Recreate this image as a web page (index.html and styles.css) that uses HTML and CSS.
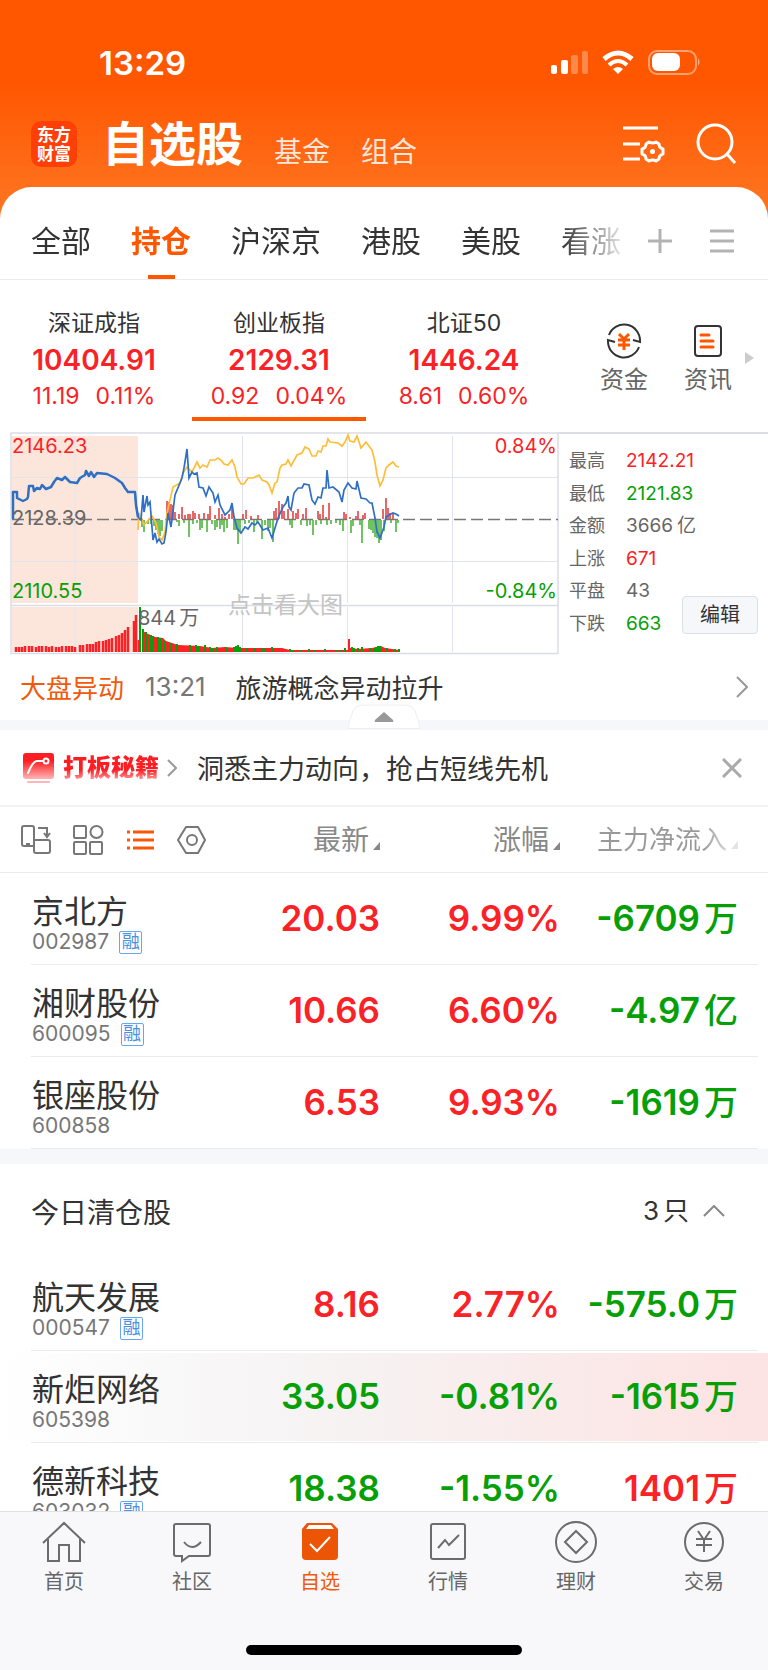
FILE: index.html
```html
<!DOCTYPE html>
<html lang="zh-CN">
<head>
<meta charset="utf-8">
<meta name="viewport" content="width=device-width, initial-scale=1">
<title>自选股</title>
<link rel="stylesheet" href="styles.css">
</head>
<body>
<header class="top">
  <div class="status">
    <span class="clock">13:29</span>
    <svg class="status-icons" viewBox="0 0 150 26" width="150" height="26" aria-hidden="true">
      <g fill="#fff">
        <rect x="0" y="15" width="6" height="9" rx="2"/>
        <rect x="10" y="10" width="7" height="14" rx="2"/>
        <rect x="20" y="5" width="7" height="19" rx="2" opacity=".3"/>
        <rect x="31" y="1" width="6" height="23" rx="2" opacity=".3"/>
        <path d="M67 24 62 19Q67 15 72 19Z"/>
        <rect x="101" y="3" width="28" height="18" rx="6"/>
        <path d="M147 8q3 4 0 8z" opacity=".5"/>
      </g>
      <g fill="none" stroke="#fff" stroke-width="5">
        <path d="M53 9Q67-3 81 9"/>
        <path d="M58 15Q67 7 76 15" stroke-width="4"/>
      </g>
      <rect x="98" y="1" width="47" height="23" rx="8" fill="none" stroke="#fff" stroke-width="2" opacity=".45"/>
    </svg>
  </div>
  <div class="bar">
    <span class="logo">东方<br>财富</span>
    <nav class="modes">
      <a class="mode-current" href="#">自选股</a>
      <a href="#">基金</a>
      <a href="#">组合</a>
    </nav>
    <button class="icon-btn" aria-label="设置">
      <svg viewBox="0 0 42 38" width="42" height="38" fill="none" stroke="#fff" stroke-width="3">
        <path d="M0 3H35M0 19H17M0 34H17"/>
        <path stroke-width="3" stroke-linejoin="round" d="M26 17q4 2 7 0l3 2q0 4 4 5v5q-4 1-4 5l-3 2q-3-2-7 0l-3-2q0-4-4-5v-5q4-1 4-5z"/>
        <circle cx="29.500" cy="26.500" r="2.500" fill="#fff" stroke="none"/>
      </svg>
    </button>
    <button class="icon-btn search" aria-label="搜索">
      <svg viewBox="0 0 42 42" width="42" height="42" fill="none" stroke="#fff" stroke-width="3">
        <circle cx="20" cy="19" r="17"/><path d="M32 31 40 40"/>
      </svg>
    </button>
  </div>
</header>

<main class="sheet">
  <div class="groups">
    <nav class="group-tabs">
      <a href="#">全部</a>
      <a class="on" href="#">持仓</a>
      <a href="#">沪深京</a>
      <a href="#">港股</a>
      <a href="#">美股</a>
      <a href="#">看涨</a>
    </nav>
    <button class="icon-btn" aria-label="添加分组">
      <svg viewBox="0 0 26 26" width="26" height="26" stroke="#b3b3b3" stroke-width="3"><path d="M13 1V25M1 13H25"/></svg>
    </button>
    <button class="icon-btn group-menu" aria-label="分组管理">
      <svg viewBox="0 0 24 26" width="24" height="26" stroke="#b3b3b3" stroke-width="3"><path d="M0 3H24M0 13H24M0 23H24"/></svg>
    </button>
  </div>

  <section class="indices">
    <a class="index" href="#"><span class="index-name">深证成指</span><b>10404.91</b><span class="index-move"><i>11.19</i><i>0.11%</i></span></a>
    <a class="index picked" href="#"><span class="index-name">创业板指</span><b>2129.31</b><span class="index-move"><i>0.92</i><i>0.04%</i></span></a>
    <a class="index" href="#"><span class="index-name">北证50</span><b>1446.24</b><span class="index-move"><i>8.61</i><i>0.60%</i></span></a>
    <a class="tool tool-first" href="#">
      <svg viewBox="0 0 36 36" width="36" height="36" fill="none" stroke="#333" stroke-width="2">
        <path d="M3 12A16 16 0 0 1 34 18V19L27 17M33 24A16 16 0 0 1 2 18V17L9 19"/>
        <path stroke="#ff5600" stroke-width="3" d="M13 11l5 5 5-5M18 16V27M12 17H24M12 22H24"/>
      </svg>
      资金
    </a>
    <a class="tool" href="#">
      <svg viewBox="0 0 36 36" width="36" height="36" fill="none" stroke="#333" stroke-width="2">
        <rect x="5" y="3" width="26" height="30" rx="3"/>
        <path stroke="#ff5600" stroke-width="3" stroke-linecap="round" d="M11 12H19M11 18H23M11 24H23"/>
      </svg>
      资讯
    </a>
    <span class="more"></span>
  </section>

  <section class="market">
    <svg class="chart" viewBox="10 432 549 223" role="img" aria-label="创业板指分时图">
      <path fill="#fce5da" d="M12 436H138V603H12zM12 607H138V652H12z"/>
      <path fill="none" stroke="#e1e4ee" stroke-width="1" d="M75 436V603M242.500 436V603M347.500 436V603M452.500 436V603M75 607V652M242.500 607V652M347.500 607V652M452.500 607V652M11 477.500H558M11 561.500H558"/>
      <path fill="none" stroke="#dadde5" stroke-width="1.500" d="M10 433H559M11 433V653.500H558V433M11 605.500H558"/>
      <path stroke="#777" stroke-width="1.500" stroke-dasharray="12 5" d="M12 519.500H558"/>
      <path fill="none" stroke="#e84c4c" stroke-width="1.700" d="M167 519V501M169 519V502M171 519V504M173 519V505M175 519V512M179 519V514M182 519V507M185 519V515M188 519V514M190 519V514M193 519V511M195 519V513M199 519V514M204 519V513M208 519V514M210 519V506M215 519V515M219 519V508M222 519V514M225 519V517M229 519V514M232 519V507M243 519V514M246 519V510M251 519V516M258 519V515M274 519V511M276 519V508M279 519V501M282 519V504M284 519V511M288 519V509M293 519V511M296 519V513M298 519V509M303 519V514M306 519V508M318 519V511M320 519V514M323 519V505M326 519V517M329 519V503M344 519V512M346 519V514M350 519V517M356 519V516M358 519V511M363 519V515M365 519V513M383 519V509M386 519V498M388 519V508M390 519V513M393 519V514"/>
      <path fill="none" stroke="#57b947" stroke-width="1.700" d="M142 520V527M144 520V532M148 520V524M151 520V524M154 520V526M156 520V530M158 520V534M160 520V536M162 520V531M177 520V522M179 520V526M184 520V523M189 520V537M193 520V524M197 520V523M200 520V530M202 520V528M207 520V532M212 520V524M215 520V530M217 520V527M220 520V529M222 520V525M224 520V532M227 520V528M234 520V530M236 520V530M238 520V544M240 520V531M245 520V524M249 520V523M254 520V532M257 520V523M262 520V539M265 520V525M268 520V531M270 520V528M273 520V542M290 520V525M292 520V528M301 520V525M307 520V526M310 520V525M313 520V535M316 520V525M321 520V524M327 520V525M331 520V524M336 520V523M340 520V525M343 520V531M351 520V533M353 520V526M360 520V525M362 520V543M369 520V529M371 520V530M373 520V533M375 520V537M377 520V538M379 520V543M381 520V540M384 520V531M391 520V523M396 520V532M398 520V523"/>
      <path fill="none" stroke="#ffbd38" stroke-width="1.700" d="M138 530 139 513 144 525 152 516 156 523 159 537 162 540 165 532 167 513 173 487 180 483 183 473 187 467 192 472 197 462 200 468 203 465 207 467 210 460 215 460 218 458 222 461 224 464 228 465 232 460 235 467 237 477 241 484 244 484 248 478 253 478 259 475 262 480 267 482 269 485 272 493 275 483 277 482 280 468 282 465 286 464 288 460 291 466 297 455 302 453 305 447 309 449 312 456 316 456 318 451 321 452 323 446 326 446 328 439 330 442 338 443 342 446 345 442 348 435 350 441 354 442 357 436 361 448 366 442 372 450 375 462 377 475 380 486 383 480 386 468 389 465 393 462 396 466 399 467"/>
      <path fill="none" stroke="#2f70c4" stroke-width="1.700" d="M135 492 136 505 138 517 141 520 143 495 144 512 147 496 148 505 150 502 153 540 155 533 157 542 159 539 162 544 164 543 166 532 168 513 171 527 175 495 182 478 184 468 187 449 189 478 192 472 194 474 197 473 199 487 203 488 206 496 209 487 213 493 215 502 218 495 220 505 225 515 230 510 232 503 234 517 237 528 241 533 245 527 248 529 252 523 255 525 258 522 263 530 268 528 272 538 278 518 283 507 286 503 288 496 289 507 291 510 294 493 298 488 302 488 304 484 309 485 312 500 315 504 318 497 321 498 323 488 326 488 327 470 329 488 333 487 339 492 342 502 344 490 348 483 352 488 356 489 357 481 361 498 366 499 370 503 372 503 375 518 377 532 380 538 384 527 386 517 389 515 393 513 396 514 399 516"/>
      <path fill="none" stroke="#2f70c4" stroke-width="2.500" stroke-linejoin="round" d="M13 519V492H17V498L19 499 23 501 27 499 28 497 29 486H33L34 491 37 488 40 489 42 485 46 489 51 487 54 482 57 478 62 480 65 477 70 482 77 483 80 478 85 475 86 471 89 476 91 472 94 477 97 473 107 474 115 478 122 483 125 488 128 492H135L136 505 138 517"/>
      <path fill="none" stroke="#fa2226" stroke-width="2.500" d="M16 652V647M19 652V647M22 652V647M25 652V646M29 652V646M32 652V646M36 652V647M39 652V646M42 652V646M46 652V646M49 652V647M52 652V646M56 652V647M59 652V647M62 652V646M66 652V646M69 652V646M72 652V646M75 652V647M80 652V645M83 652V645M87 652V644M90 652V644M93 652V644M96 652V642M99 652V641M103 652V641M106 652V640M109 652V639M112 652V638M116 652V636M119 652V635M122 652V633M125 652V630M128 652V627M134 652V621M136 652V615M139 652V640"/>
      <path fill="#fa2226" d="M142 652V630L146 633 155 637 163 638 166 641 178 645 200 646 212 648 225 647 238 648 250 648 270 648 282 648 290 650 340 650 348 650V639H350V648L358 649 372 648 381 646 385 648 399 650V652z"/>
      <path fill="none" stroke="#0a9d0a" stroke-width="2" d="M140 652V607M143 652V629M146 652V632M151 652V635M153 652V636M158 652V637M161 652V638M164 652V641M171 652V643M177 652V644M190 652V645M196 652V645M199 652V646M205 652V645M210 652V647M213 652V648M217 652V647M226 652V647M234 652V647M236 652V646M238 652V645M240 652V647M247 652V648M255 652V648M262 652V648M265 652V649M272 652V647M290 652V649M293 652V650M301 652V650M309 652V649M314 652V650M325 652V649M336 652V650M340 652V650M345 652V648M352 652V647M354 652V648M358 652V648M362 652V647M370 652V648M374 652V648M376 652V647M378 652V646M380 652V646M387 652V648M395 652V649M399 652V649"/>
      <g class="chart-text">
        <text class="up" x="12" y="453">2146.23</text>
        <text class="flat" x="12" y="525">2128.39</text>
        <text class="down" x="12" y="598">2110.55</text>
        <text class="up" x="557" y="453" text-anchor="end">0.84%</text>
        <text class="down" x="557" y="598" text-anchor="end">-0.84%</text>
        <text class="flat" x="138" y="625">844<tspan dx="3">万</tspan></text>
        <text class="hint" x="228" y="613">点击看大图</text>
      </g>
    </svg>
    <div class="stats">
      <dl>
        <div><dt>最高</dt><dd class="up">2142.21</dd></div>
        <div><dt>最低</dt><dd class="down">2121.83</dd></div>
        <div><dt>金额</dt><dd>3666<span class="unit">亿</span></dd></div>
        <div><dt>上涨</dt><dd class="up">671</dd></div>
        <div><dt>平盘</dt><dd>43</dd></div>
        <div><dt>下跌</dt><dd class="down">663</dd></div>
      </dl>
      <button class="edit">编辑</button>
    </div>
  </section>

  <a class="news" href="#">
    <span class="news-kind">大盘异动</span>
    <time>13:21</time>
    <span class="news-title">旅游概念异动拉升</span>
    <svg viewBox="0 0 12 22" width="12" height="22" fill="none" stroke="#999" stroke-width="2"><path d="M1 1 11 11 1 21"/></svg>
  </a>
  <div class="band fold">
    <button class="fold-btn" aria-label="收起">
      <svg viewBox="0 0 74 25" width="74" height="25">
        <path fill="#fff" stroke="#eceef1" stroke-width="1" d="M1 24.500Q3 14 6 7 9 1 17 1H57Q65 1 68 7 71 14 73 24.500z"/>
        <path fill="#999" d="M37 8 46 16Q47 18 45 18H29Q27 18 28 16z"/>
      </svg>
    </button>
  </div>

  <section class="promo">
    <svg viewBox="0 0 31 30" width="31" height="30">
      <defs><linearGradient id="fade" x1="0" y1="0" x2="0" y2="1"><stop offset=".3" stop-color="#fd1d22"/><stop offset="1" stop-color="#ffb5b5"/></linearGradient></defs>
      <rect width="31" height="26" rx="3" fill="url(#fade)"/>
      <path fill="none" stroke="#fff" stroke-width="2" stroke-linecap="round" d="M5 20Q10 8 14 8H20"/>
      <circle cx="23" cy="8" r="2.500" fill="none" stroke="#fff" stroke-width="2"/>
      <path stroke="#ffb5b5" stroke-width="2" stroke-linecap="round" d="M5 29H26"/>
    </svg>
    <strong>打板秘籍</strong>
    <svg class="promo-arrow" viewBox="0 0 10 18" width="10" height="18" fill="none" stroke="#999" stroke-width="2"><path d="M1 1 9 9 1 17"/></svg>
    <a href="#">洞悉主力动向，抢占短线先机</a>
    <button class="icon-btn" aria-label="关闭">
      <svg viewBox="0 0 20 20" width="20" height="20" stroke="#aaa" stroke-width="3"><path d="M1 1 19 19M19 1 1 19"/></svg>
    </button>
  </section>

  <table class="stocks">
    <colgroup><col><col class="c-price"><col class="c-rate"><col class="c-flow"></colgroup>
    <thead>
      <tr>
        <th>
          <div class="views">
            <button class="icon-btn" aria-label="横屏"><svg viewBox="0 0 31 30" width="31" height="30" fill="none" stroke="#777" stroke-width="2"><path d="M13 22H3Q1 22 1 20V4Q1 2 3 2H11Q13 2 13 4V27Q13 29 15 29H27Q29 29 29 27V18Q29 16 27 16H13M5 20H9" transform="translate(0 -1)"/><path d="M17 3H26V10M23 8 26 12 29 8"/></svg></button>
            <button class="icon-btn" aria-label="宫格"><svg viewBox="0 0 31 30" width="31" height="30" fill="none" stroke="#777" stroke-width="2"><rect x="1" y="1" width="12" height="12" rx="1"/><circle cx="23.500" cy="7" r="6"/><rect x="1" y="17" width="12" height="12" rx="1"/><rect x="17" y="17" width="12" height="12" rx="1"/></svg></button>
            <button class="icon-btn" aria-label="列表"><svg viewBox="0 0 31 30" width="31" height="30" stroke="#ff5600" stroke-width="3"><path d="M2 7H5M2 15H5M2 23H5M8 7H29M8 15H29M8 23H29"/></svg></button>
            <button class="icon-btn" aria-label="设置"><svg viewBox="0 0 31 30" width="31" height="30" fill="none" stroke="#777" stroke-width="2"><path stroke-linejoin="round" d="M9 2H21L28 15 21 28H9L1 15z"/><circle cx="15" cy="15" r="5"/></svg></button>
          </div>
        </th>
        <th><button class="sort">最新</button></th>
        <th><button class="sort">涨幅</button></th>
        <th><button class="sort last">主力净流入</button></th>
      </tr>
    </thead>
    <tbody>
      <tr><td><span class="name">京北方</span><span class="code">002987<em>融</em></span></td><td class="up">20.03</td><td class="up">9.99%</td><td class="down">-6709<span class="unit">万</span></td></tr>
      <tr><td><span class="name">湘财股份</span><span class="code">600095<em>融</em></span></td><td class="up">10.66</td><td class="up">6.60%</td><td class="down">-4.97<span class="unit">亿</span></td></tr>
      <tr><td><span class="name">银座股份</span><span class="code">600858</span></td><td class="up">6.53</td><td class="up">9.93%</td><td class="down">-1619<span class="unit">万</span></td></tr>
    </tbody>
  </table>
  <div class="band"></div>
  <button class="section-head">
    <span>今日清仓股</span>
    <span class="count">3<span class="unit">只</span></span>
    <svg viewBox="0 0 22 12" width="22" height="12" fill="none" stroke="#888" stroke-width="2"><path d="M1 11 11 1 21 11"/></svg>
  </button>
  <table class="stocks">
    <colgroup><col><col class="c-price"><col class="c-rate"><col class="c-flow"></colgroup>
    <tbody>
      <tr><td><span class="name">航天发展</span><span class="code">000547<em>融</em></span></td><td class="up">8.16</td><td class="up">2.77%</td><td class="down">-575.0<span class="unit">万</span></td></tr>
      <tr class="flash"><td><span class="name">新炬网络</span><span class="code">605398</span></td><td class="down">33.05</td><td class="down">-0.81%</td><td class="down">-1615<span class="unit">万</span></td></tr>
      <tr><td><span class="name">德新科技</span><span class="code">603032<em>融</em></span></td><td class="down">18.38</td><td class="down">-1.55%</td><td class="up">1401<span class="unit">万</span></td></tr>
    </tbody>
  </table>
</main>

<footer class="dock">
  <nav>
    <a href="#"><svg viewBox="0 0 44 44" width="44" height="44"><path d="M1 23 22 3 43 23M6 19V41H17V25H27V41H38V19"/></svg>首页</a>
    <a href="#"><svg viewBox="0 0 44 44" width="44" height="44"><path d="M6 4H38Q40 4 40 6V34Q40 36 38 36H19L12 41V36H6Q4 36 4 34V6Q4 4 6 4zM14 22Q22 32 31 22"/></svg>社区</a>
    <a class="on" href="#"><svg viewBox="0 0 44 44" width="44" height="44"><path class="solid" d="M9 3H34L40 9V36Q40 40 36 40H8Q4 40 4 36V9z"/><path class="tick" d="M12 24 19 31 32 17"/><path class="lid" d="M11 5H33L36 9H8z"/></svg>自选</a>
    <a href="#"><svg viewBox="0 0 44 44" width="44" height="44"><rect x="5" y="4" width="34" height="35" rx="2"/><path d="M12 28 19 20 23 25 33 15"/></svg>行情</a>
    <a href="#"><svg viewBox="0 0 44 44" width="44" height="44"><circle cx="22" cy="22" r="20"/><path d="M22 11 33 22 22 33 11 22z"/></svg>理财</a>
    <a href="#"><svg viewBox="0 0 44 44" width="44" height="44"><circle cx="22" cy="22" r="19"/><path d="M16 11 22 20 28 11M22 20V32M14 19H30M14 25H30"/></svg>交易</a>
  </nav>
  <div class="home-bar"></div>
</footer>
</body>
</html>
```

FILE: styles.css
```css
* { box-sizing: border-box; }

body {
  margin: 0;
  height: 100vh;
  display: flex;
  flex-direction: column;
  overflow: hidden;
  background: linear-gradient(#ff5600 80px, #ff701c 190px, #ff7422 230px);
  color: #333;
  font-family: Inter, "Noto Sans CJK SC", sans-serif;
}

a { color: inherit; text-decoration: none; }
i, em { font-style: normal; }
svg { display: block; flex: none; }
button {
  margin: 0;
  padding: 0;
  border: 0;
  background: none;
  color: inherit;
  font: inherit;
  cursor: pointer;
}

.up { color: #fa2226; }
.down { color: #06a006; }
.unit { margin-left: 4px; line-height: 0; }

/* Header */
.top { flex: none; color: #fff; }
.status {
  height: 100px;
  padding: 26px 67px 0 99px;
  display: flex;
  align-items: center;
  justify-content: space-between;
}
.clock { font-size: 33px; font-weight: 600; }
.bar {
  height: 87px;
  padding: 0 31px;
  display: flex;
  align-items: center;
}
.logo {
  width: 46px;
  height: 46px;
  padding-top: 3px;
  border-radius: 10px;
  background: #ff3f08;
  font-family: "Noto Sans CJK SC", sans-serif;
  font-size: 17px;
  font-weight: 700;
  line-height: 19px;
  text-align: center;
}
.modes {
  flex: 1;
  margin-left: 25px;
  display: flex;
  align-items: flex-end;
  gap: 31px;
  font-size: 28px;
  line-height: 34px;
  color: rgba(255, 255, 255, .85);
}
.modes .mode-current {
  font-size: 47px;
  font-weight: 700;
  line-height: 50px;
  color: #fff;
}
.search { margin-left: 30px; }

/* Sheet */
.sheet {
  flex: 1;
  min-height: 0;
  overflow: hidden;
  border-radius: 32px 32px 0 0;
  background: #fff;
}
.groups {
  height: 93px;
  padding: 0 34px 0 31px;
  display: flex;
  align-items: stretch;
  border-bottom: 1px solid #ebebeb;
}
.group-menu { margin-left: 37px; }
.groups .icon-btn svg { margin-top: 16px; }
.group-tabs {
  flex: 1;
  display: flex;
  gap: 40px;
  font-size: 30px;
  line-height: 109px;
  white-space: nowrap;
  -webkit-mask-image: linear-gradient(90deg, #000 530px, transparent 600px);
  mask-image: linear-gradient(90deg, #000 530px, transparent 600px);
}
.group-tabs .on {
  color: #ff5600;
  font-weight: 700;
  background: linear-gradient(#ff5600, #ff5600) no-repeat center bottom / 27px 4px;
}

/* Indices */
.indices {
  height: 152px;
  padding-right: 14px;
  display: flex;
  align-items: flex-start;
}
.index {
  flex: 0 0 174px;
  margin: 0 6px 0 7px;
  height: 141px;
  padding-top: 28px;
  display: flex;
  flex-direction: column;
  align-items: center;
}
.index + .index { margin-left: 5px; }
.picked { border-bottom: 4px solid #ff5600; }
.index-name { font-size: 23px; line-height: 30px; }
.index b {
  font-size: 28px;
  font-weight: 600;
  line-height: 44px;
  color: #fa2226;
}
.index-move {
  display: flex;
  gap: 16px;
  font-size: 23px;
  line-height: 29px;
  color: #fa2226;
}
.tool {
  margin-top: 43px;
  display: flex;
  flex-direction: column;
  align-items: center;
  gap: 2px;
  font-size: 24px;
  line-height: 38px;
  color: #666;
}
.tool-first { margin-left: auto; }
.tool + .tool { margin-left: 36px; }
.more {
  margin: 72px 0 0 13px;
  border: 6px solid transparent;
  border-left: 9px solid #ccc;
  border-right: 0;
}

/* Chart and figures */
.market { display: flex; }
.chart {
  flex: 549 1 0;
  min-width: 0;
  margin-left: 10px;
}
.chart-text { font-size: 20px; }
.chart-text .up, .chart-text .down { fill: currentColor; }
.chart-text .flat { fill: #666; }
.chart-text .hint { fill: #c4c4c4; font-size: 23px; }
.stats {
  flex: 209 1 0;
  position: relative;
  border-top: 2px solid #dadde5;
}
.stats dl {
  height: 100%;
  margin: 0;
  padding: 12px 0 16px 10px;
  display: flex;
  flex-direction: column;
  justify-content: space-between;
  font-size: 19px;
  line-height: 30px;
  color: #666;
}
.stats dl div { display: flex; }
.stats dt { width: 57px; font-size: 18px; }
.stats dd { margin: 0; }
.edit {
  position: absolute;
  right: 10px;
  bottom: 21px;
  width: 76px;
  height: 38px;
  border: 1px solid #dcdfe5;
  border-radius: 4px;
  background: #f6f7fa;
  font-size: 20px;
  line-height: 34px;
}

/* News */
.news {
  height: 65px;
  padding: 0 20px 2px;
  display: flex;
  align-items: center;
  font-size: 26px;
}
.news-kind { color: #f05a0a; }
.news time { margin-left: 21px; font-size: 26px; color: #777; }
.news-title { flex: 1; margin-left: 30px; }
.band { height: 15px; background: #f6f7fa; }
.fold { height: 10px; position: relative; }
.fold-btn {
  position: absolute;
  left: 50%;
  bottom: 1px;
  transform: translateX(-50%);
}

/* Promo */
.promo {
  height: 77px;
  padding: 0 26px 0 23px;
  display: flex;
  align-items: center;
  border-bottom: 2px solid #f2f3f5;
  font-size: 27px;
}
.promo strong {
  margin-left: 9px;
  font-size: 24px;
  font-weight: 900;
  line-height: 34px;
  color: transparent;
  background: linear-gradient(#fd1d22 55%, #ff9a9a 85%);
  -webkit-background-clip: text;
  background-clip: text;
}
.promo-arrow { margin: 0 20px 0 8px; }
.promo a { flex: 1; }

/* Stock tables */
.stocks {
  width: 100%;
  table-layout: fixed;
  border-collapse: collapse;
}
.c-price { width: 140px; }
.c-rate { width: 180px; }
.c-flow { width: 208px; }
.stocks th { height: 66px; padding: 0; font-weight: 400; text-align: right; }
.stocks thead tr { background: linear-gradient(#ebebeb, #ebebeb) no-repeat bottom / 100% 1px; }
.stocks th:last-child, .stocks td:last-child { padding-right: 30px; }
.views { padding-left: 21px; display: flex; gap: 21px; }
.sort {
  display: inline-flex;
  align-items: baseline;
  gap: 4px;
  font-size: 28px;
  line-height: 40px;
  color: #888;
}
.sort::after {
  content: "";
  border-left: 7px solid transparent;
  border-bottom: 8px solid #888;
}
.sort.last {
  font-size: 26px;
  color: transparent;
  background: linear-gradient(90deg, #999 75%, #e0e0e0 95%);
  -webkit-background-clip: text;
  background-clip: text;
}
.sort.last::after { border-bottom-color: #e4e4e4; }
.stocks tbody tr {
  height: 92px;
  background: linear-gradient(#ebebeb, #ebebeb) no-repeat 31px bottom / calc(100% - 41px) 1px;
}
.stocks tbody .flash {
  background:
    linear-gradient(#ebebeb, #ebebeb) no-repeat 31px bottom / calc(100% - 41px) 1px,
    linear-gradient(90deg, #fff, #f6f4f4 38%, #fde4e4 95%) no-repeat 0 2px / 100% 88px;
}
.stocks td {
  padding: 0 0 2px;
  font-size: 35px;
  font-weight: 600;
  line-height: 40px;
  text-align: right;
  white-space: nowrap;
}
.stocks td:first-child {
  padding: 12px 0 0 32px;
  font-weight: 400;
  text-align: left;
}
.stocks td .unit { font-size: 34px; font-weight: 500; }
.stocks .name { display: block; font-size: 32px; line-height: 34px; }
.code {
  display: flex;
  align-items: center;
  gap: 10px;
  font-size: 21px;
  line-height: 26px;
  color: #777;
}
.code em {
  width: 23px;
  height: 23px;
  border: 1px solid #6aa6ee;
  border-radius: 2px;
  color: #4a90e2;
  font-size: 18px;
  line-height: 20px;
  text-align: center;
}
.section-head {
  width: 100%;
  height: 95px;
  padding: 0 43px 2px 31px;
  display: flex;
  align-items: center;
  font-size: 28px;
}
.section-head .count {
  margin: 0 14px 0 auto;
  font-size: 26px;
}

/* Dock */
.dock {
  flex: none;
  height: 159px;
  border-top: 1px solid #dfe1e6;
  background: #f8f8fb;
  display: flex;
  flex-direction: column;
  justify-content: space-between;
}
.dock nav {
  padding-top: 8px;
  display: grid;
  grid-template-columns: repeat(6, 1fr);
}
.dock a {
  display: flex;
  flex-direction: column;
  align-items: center;
  font-size: 20px;
  line-height: 36px;
  color: #666;
}
.dock svg { fill: none; stroke: #6c6c6c; stroke-width: 2; }
.dock .on { color: #f05a0a; }
.dock .solid { fill: #eb5505; stroke: none; }
.dock .tick { stroke: #fff; }
.dock .lid { fill: #fff; stroke: none; }
.home-bar {
  width: 36%;
  height: 10px;
  margin: 0 auto 15px;
  border-radius: 5px;
  background: #000;
}
```
